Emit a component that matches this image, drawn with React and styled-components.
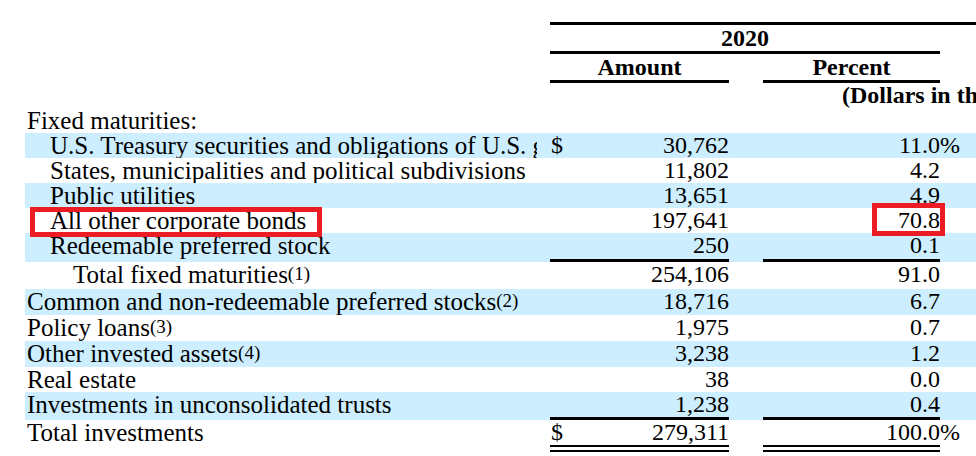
import React from "react";
import styled, { createGlobalStyle } from "styled-components";

const GlobalStyle = createGlobalStyle`
  html, body {
    margin: 0;
    padding: 0;
    background: #ffffff;
  }
  body {
    font-family: "Liberation Serif", "Times New Roman", serif;
    color: #000000;
  }
`;

const COLS = "525px 179px 34px 177px 1fr";
const SHADE = "#cceeff";
const MARK = "#ec1c24";

const Page = styled.div`
  width: 976px;
  height: 456px;
  overflow: hidden;
  padding: 22px 0 0 25px;
  box-sizing: border-box;
`;

const Table = styled.div`
  width: 1200px;
  display: flex;
  flex-direction: column;
  font-size: 24px;
  line-height: 25px;
`;

const HeadGrid = styled.div`
  display: grid;
  grid-template-columns: ${COLS};
  font-weight: bold;
  white-space: nowrap;
`;

const TopRule = styled.div`
  grid-column: 2 / -1;
  border-top: 3px solid #000;
`;

const Year = styled.div`
  grid-column: 2 / 5;
  height: 26px;
  line-height: 26px;
  text-align: center;
  border-bottom: 3px solid #000;
`;

const ColHead = styled.div`
  grid-column: ${(p) => p.$col};
  height: 26px;
  line-height: 26px;
  text-align: center;
  border-bottom: 3px solid #000;
`;

const Units = styled.div`
  grid-column: 4 / -1;
  height: 25px;
  padding-left: 79px;
`;

const Row = styled.div`
  position: relative;
  display: grid;
  grid-template-columns: ${COLS};
  background: ${(p) => (p.$shade ? SHADE : "transparent")};
`;

const Label = styled.div`
  height: ${(p) => p.$h}px;
  margin-right: 13px;
  padding-left: ${(p) => 2 + p.$level * 23}px;
  font-size: 25px;
  white-space: nowrap;
  overflow: hidden;
`;

const ruleFor = (r) =>
  r === "double" ? "7px double #000" : r === "single" ? "3px solid #000" : "0";

const Amount = styled.div`
  height: ${(p) => p.$h}px;
  display: flex;
  justify-content: space-between;
  padding-left: 1px;
  border-bottom: ${(p) => ruleFor(p.$rule)};
`;

const Pct = styled.div`
  grid-column: 4;
  height: ${(p) => p.$h}px;
  text-align: right;
  border-bottom: ${(p) => ruleFor(p.$rule)};
`;

const Suffix = styled.div`
  height: ${(p) => p.$h}px;
`;

const Note = styled.span`
  font-size: 19px;
  line-height: 19px;
  vertical-align: 3px;
`;

const Mark = styled.div`
  position: absolute;
  z-index: 1;
  left: ${(p) => p.$x}px;
  top: ${(p) => p.$y}px;
  width: ${(p) => p.$w}px;
  height: ${(p) => p.$hh}px;
  border: 5px solid ${MARK};
  box-sizing: border-box;
`;

const rows = [
  { label: "Fixed maturities:", level: 0, h: 25 },
  {
    label: "U.S. Treasury securities and obligations of U.S. government authorities and agencies",
    level: 1,
    shade: true,
    dollar: true,
    amount: "30,762",
    pct: "11.0",
    suffix: "%",
  },
  {
    label: "States, municipalities and political subdivisions",
    level: 1,
    amount: "11,802",
    pct: "4.2",
  },
  { label: "Public utilities", level: 1, shade: true, amount: "13,651", pct: "4.9" },
  {
    label: "All other corporate bonds",
    level: 1,
    amount: "197,641",
    pct: "70.8",
    marked: true,
  },
  {
    label: "Redeemable preferred stock",
    level: 1,
    shade: true,
    amount: "250",
    pct: "0.1",
    h: 26,
    rule: "single",
  },
  {
    label: "Total fixed maturities",
    note: "(1)",
    level: 2,
    amount: "254,106",
    pct: "91.0",
    h: 27,
  },
  {
    label: "Common and non-redeemable preferred stocks",
    note: "(2)",
    level: 0,
    shade: true,
    amount: "18,716",
    pct: "6.7",
    h: 26,
  },
  { label: "Policy loans", note: "(3)", level: 0, amount: "1,975", pct: "0.7", h: 26 },
  {
    label: "Other invested assets",
    note: "(4)",
    level: 0,
    shade: true,
    amount: "3,238",
    pct: "1.2",
    h: 26,
  },
  { label: "Real estate", level: 0, amount: "38", pct: "0.0" },
  {
    label: "Investments in unconsolidated trusts",
    level: 0,
    shade: true,
    amount: "1,238",
    pct: "0.4",
    rule: "single",
  },
  {
    label: "Total investments",
    level: 0,
    dollar: true,
    amount: "279,311",
    pct: "100.0",
    suffix: "%",
    rule: "double",
  },
];

function TableRow({ row }) {
  const h = row.h || 25;
  const hasValues = row.amount !== undefined;
  return (
    <Row $shade={row.shade}>
      <Label $h={h} $level={row.level}>
        {row.label}
        {row.note && <Note>{row.note}</Note>}
      </Label>
      {hasValues && (
        <>
          <Amount $h={h} $rule={row.rule}>
            <span>{row.dollar ? "$" : ""}</span>
            <span>{row.amount}</span>
          </Amount>
          <Pct $h={h} $rule={row.rule}>
            {row.pct}
          </Pct>
          <Suffix $h={h}>{row.suffix}</Suffix>
        </>
      )}
      {row.marked && (
        <>
          <Mark $x={5} $y={-1} $w={292} $hh={30} />
          <Mark $x={847} $y={-5} $w={73} $hh={33} />
        </>
      )}
    </Row>
  );
}

export default function App() {
  return (
    <>
      <GlobalStyle />
      <Page>
        <Table>
          <HeadGrid>
            <TopRule />
            <Year>2020</Year>
            <ColHead $col={2}>Amount</ColHead>
            <ColHead $col={4}>Percent</ColHead>
            <Units>(Dollars in thousands)</Units>
          </HeadGrid>
          {rows.map((row, i) => (
            <TableRow key={i} row={row} />
          ))}
        </Table>
      </Page>
    </>
  );
}
